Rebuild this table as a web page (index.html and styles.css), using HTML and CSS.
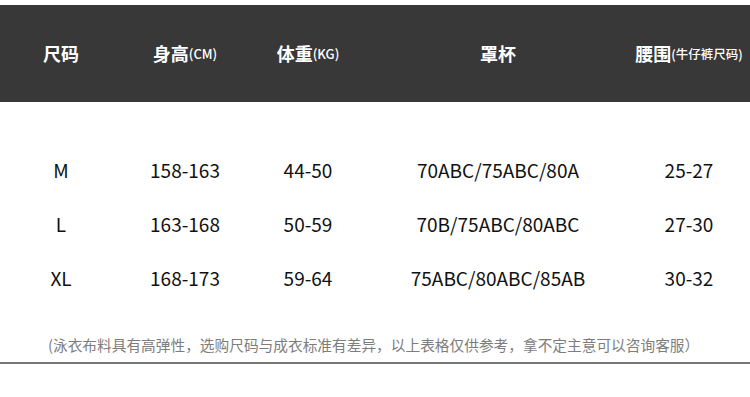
FILE: index.html
```html
<!DOCTYPE html>
<html lang="zh">
<head>
<meta charset="utf-8">
<link rel="stylesheet" href="styles.css">
</head>
<body>
<div class="page">
  <div class="head grid">
    <div class="cell">尺码</div>
    <div class="cell">身高<small>(CM)</small></div>
    <div class="cell">体重<small>(KG)</small></div>
    <div class="cell">罩杯</div>
    <div class="cell">腰围<small class="cn">(牛仔裤尺码)</small></div>
  </div>
  <div class="body">
    <div class="row grid">
      <div class="cell">M</div><div class="cell">158-163</div><div class="cell">44-50</div><div class="cell">70ABC/75ABC/80A</div><div class="cell">25-27</div>
    </div>
    <div class="row grid">
      <div class="cell">L</div><div class="cell">163-168</div><div class="cell">50-59</div><div class="cell">70B/75ABC/80ABC</div><div class="cell">27-30</div>
    </div>
    <div class="row grid">
      <div class="cell">XL</div><div class="cell">168-173</div><div class="cell">59-64</div><div class="cell">75ABC/80ABC/85AB</div><div class="cell">30-32</div>
    </div>
  </div>
  <div class="note">(泳衣布料具有高弹性，选购尺码与成衣标准有差异，以上表格仅供参考，拿不定主意可以咨询客服）</div>
</div>
</body>
</html>
```
FILE: styles.css
```css
html, body { margin: 0; padding: 0; background: #fff; }
body { width: 750px; height: 397px; overflow: hidden; font-family: "Noto Sans CJK SC", "Noto Sans", sans-serif; }
.page { padding-top: 5px; }
.grid { display: grid; grid-template-columns: 122px 126px 120px 260px 122px; }
.cell { display: flex; align-items: center; justify-content: center; white-space: nowrap; }
.head { background: #383838; height: 97px; color: #fff; font-weight: 700; font-size: 18px; padding-bottom: 1px; box-sizing: border-box; }
.head small { font-size: 13px; font-weight: 500; }
.head small.cn { font-size: 12.5px; font-weight: 500; }
.body { padding-top: 40px; }
.row { height: 54px; font-size: 19px; color: #111; }
.note { margin-top: 29px; height: 29px; padding-left: 48px; font-size: 14.7px; color: #7d7d7d; line-height: 24px; border-bottom: 2px solid #777; }
```
